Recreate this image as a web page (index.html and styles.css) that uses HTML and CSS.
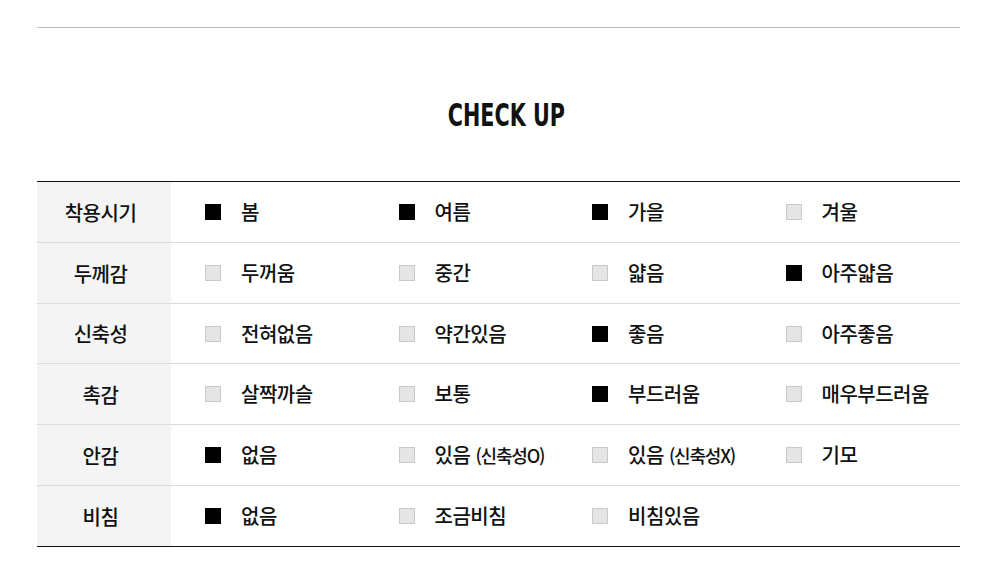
FILE: index.html
```html
<!DOCTYPE html>
<html lang="ko">
<head>
<meta charset="utf-8">
<link rel="stylesheet" href="styles.css">
</head>
<body>
<div class="wrap">
  <div class="topline"></div>
  <div class="title-wrap"><h2 class="title">CHECK UP</h2></div>
  <div class="table">
    <div class="row">
      <div class="head">착용시기</div>
      <div class="opts">
        <div class="opt"><span class="box on"></span><span class="lbl">봄</span></div>
        <div class="opt"><span class="box on"></span><span class="lbl">여름</span></div>
        <div class="opt"><span class="box on"></span><span class="lbl">가을</span></div>
        <div class="opt"><span class="box"></span><span class="lbl">겨울</span></div>
      </div>
    </div>
    <div class="row">
      <div class="head">두께감</div>
      <div class="opts">
        <div class="opt"><span class="box"></span><span class="lbl">두꺼움</span></div>
        <div class="opt"><span class="box"></span><span class="lbl">중간</span></div>
        <div class="opt"><span class="box"></span><span class="lbl">얇음</span></div>
        <div class="opt"><span class="box on"></span><span class="lbl">아주얇음</span></div>
      </div>
    </div>
    <div class="row short">
      <div class="head">신축성</div>
      <div class="opts">
        <div class="opt"><span class="box"></span><span class="lbl">전혀없음</span></div>
        <div class="opt"><span class="box"></span><span class="lbl">약간있음</span></div>
        <div class="opt"><span class="box on"></span><span class="lbl">좋음</span></div>
        <div class="opt"><span class="box"></span><span class="lbl">아주좋음</span></div>
      </div>
    </div>
    <div class="row">
      <div class="head">촉감</div>
      <div class="opts">
        <div class="opt"><span class="box"></span><span class="lbl">살짝까슬</span></div>
        <div class="opt"><span class="box"></span><span class="lbl">보통</span></div>
        <div class="opt"><span class="box on"></span><span class="lbl">부드러움</span></div>
        <div class="opt"><span class="box"></span><span class="lbl">매우부드러움</span></div>
      </div>
    </div>
    <div class="row">
      <div class="head">안감</div>
      <div class="opts">
        <div class="opt"><span class="box on"></span><span class="lbl">없음</span></div>
        <div class="opt"><span class="box"></span><span class="lbl">있음 <span class="sm">(신축성O)</span></span></div>
        <div class="opt"><span class="box"></span><span class="lbl">있음 <span class="sm">(신축성X)</span></span></div>
        <div class="opt"><span class="box"></span><span class="lbl">기모</span></div>
      </div>
    </div>
    <div class="row">
      <div class="head">비침</div>
      <div class="opts">
        <div class="opt"><span class="box on"></span><span class="lbl">없음</span></div>
        <div class="opt"><span class="box"></span><span class="lbl">조금비침</span></div>
        <div class="opt"><span class="box"></span><span class="lbl">비침있음</span></div>
        <div class="opt"></div>
      </div>
    </div>
  </div>
</div>
</body>
</html>
```
FILE: styles.css
```css
html, body {
  margin: 0;
  padding: 0;
  background: #fff;
}
body {
  font-family: "Noto Sans CJK KR", "Noto Sans", sans-serif;
  color: #111;
}
.wrap {
  width: 923px;
  margin: 0 0 0 37px;
  padding-top: 27px;
}
.topline {
  height: 1px;
  background: #bdbdbd;
}
.title-wrap {
  height: 153px;
  padding-top: 70px;
  box-sizing: border-box;
  text-align: center;
}
.title {
  display: inline-block;
  margin: 0 0 0 16px;
  font-family: "DejaVu Sans Condensed", "Liberation Sans Narrow", sans-serif;
  font-weight: 700;
  font-size: 32px;
  line-height: 34px;
  color: #111;
  transform: scaleX(0.72);
}
.table {
  border-top: 1px solid #111;
  border-bottom: 1px solid #111;
}
.row {
  display: flex;
  height: 61px;
  box-sizing: border-box;
  border-top: 1px solid #dcdcdc;
}
.row:first-child {
  border-top: none;
  height: 60px;
}
.row.short {
  height: 60px;
}
.head {
  flex: none;
  width: 134px;
  padding-right: 7px;
  box-sizing: border-box;
  background: #f4f4f4;
  display: flex;
  align-items: center;
  justify-content: center;
  font-size: 20px;
  font-weight: 500;
  letter-spacing: -0.5px;
  color: #111;
}
.opts {
  flex: 1;
  display: grid;
  grid-template-columns: 193.5px 193.5px 193.5px 1fr;
  padding-left: 34px;
}
.opt {
  display: flex;
  align-items: center;
}
.box {
  width: 16px;
  height: 16px;
  box-sizing: border-box;
  background: #e5e5e5;
  border: 1px solid #c9c9c9;
  flex: none;
}
.box.on {
  background: #000;
  border-color: #000;
}
.lbl {
  margin-left: 20px;
  font-size: 20px;
  font-weight: 500;
  letter-spacing: -0.5px;
  color: #111;
  line-height: 24px;
}
.sm {
  font-size: 18px;
  letter-spacing: -1.2px;
}
```
